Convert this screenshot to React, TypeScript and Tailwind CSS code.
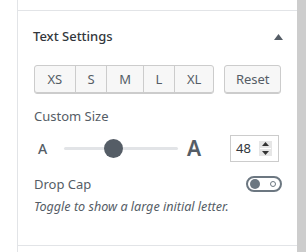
import React from "react";

export default function App() {
  const sizes = [
    { l: "XS", w: "w-[40px]" },
    { l: "S", w: "w-[32px]" },
    { l: "M", w: "w-[37px]" },
    { l: "L", w: "w-[31px]" },
    { l: "XL", w: "w-[40px]" },
  ];
  return (
    <div
      className="flex w-[306px] h-[252px] bg-white text-[#555d66] overflow-hidden"
      style={{ fontFamily: '"Noto Sans", "Open Sans", sans-serif' }}
    >
      <div className="w-[17px] shrink-0" />
      <div className="w-[280px] shrink-0 border-l border-[#e2e4e7] flex flex-col">
        <div className="h-[10px]" />
        <div className="border-t border-b border-[#e2e4e7] flex flex-col h-[236px]">
          <div className="flex items-center justify-between pl-[15px] pr-[14px] h-[50px]">
            <span className="text-[13px] font-medium text-[#32373c] leading-none">Text Settings</span>
            <svg width="9" height="6" viewBox="0 0 9 6" className="mt-[1px]">
              <path d="M4.5 0 L9 6 L0 6 Z" fill="#555d66" />
            </svg>
          </div>
          <div className="pl-[16px] pr-[16px] flex flex-col">
            <div className="flex items-center mt-[4px]">
              <div className="flex h-[29px] rounded-[3px] border border-[#ccc] bg-[#f7f7f7] shadow-[inset_0_-1px_0_#ccc] overflow-hidden">
                {sizes.map((s, i) => (
                  <div
                    key={s.l}
                    className={`${s.w} flex items-center justify-center text-[13px] text-[#555d66] ${i > 0 ? "border-l border-[#ccc]" : ""}`}
                  >
                    {s.l}
                  </div>
                ))}
              </div>
              <div className="ml-[10px] w-[57px] h-[29px] rounded-[3px] border border-[#ccc] bg-[#f7f7f7] shadow-[inset_0_-1px_0_#ccc] flex items-center justify-center text-[13px] text-[#555d66]">
                Reset
              </div>
            </div>
            <div className="mt-[16px] text-[13px] leading-none">Custom Size</div>
            <div className="flex items-center mt-[12px] h-[27px]">
              <span className="w-[12px] ml-[4px] text-[14px] font-medium leading-none">A</span>
              <div className="relative ml-[14px] w-[114px] h-[3px] bg-[#e2e4e7] rounded-full">
                <div className="absolute left-[40px] top-[-8px] w-[19px] h-[19px] rounded-full bg-[#555d66]" />
              </div>
              <span className="ml-[9px] w-[16px] text-[21px] font-semibold leading-none">A</span>
              <div className="ml-[27px] w-[49px] h-[27px] border border-[#ccc] flex items-center pl-[5px] pr-[6px] justify-between">
                <span className="text-[13px] text-[#32373c]">48</span>
                <div className="w-[13px] h-[15px] bg-[#e6e6e6] flex flex-col items-center justify-center gap-[2px]">
                  <svg width="7" height="4" viewBox="0 0 7 4"><path d="M3.5 0 L7 4 L0 4Z" fill="#333" /></svg>
                  <div className="w-[11px] h-px bg-white" />
                  <svg width="7" height="4" viewBox="0 0 7 4"><path d="M0 0 L7 0 L3.5 4Z" fill="#333" /></svg>
                </div>
              </div>
            </div>
            <div className="flex items-center justify-between mt-[14px] h-[16px]">
              <span className="text-[13px] leading-none">Drop Cap</span>
              <div className="w-[36px] h-[16px] rounded-full border-2 border-[#6c7781] flex items-center justify-between px-[2px] mr-[-1px]">
                <div className="w-[10px] h-[10px] rounded-full bg-[#6c7781]" />
                <div className="w-[6px] h-[6px] rounded-full border-[1.5px] border-[#6c7781] mr-[2px]" />
              </div>
            </div>
            <div className="mt-[9px] text-[12.6px] italic leading-none">Toggle to show a large initial letter.</div>
          </div>
        </div>
      </div>
      <div className="flex-1 bg-[#cdcdcd]" />
    </div>
  );
}
